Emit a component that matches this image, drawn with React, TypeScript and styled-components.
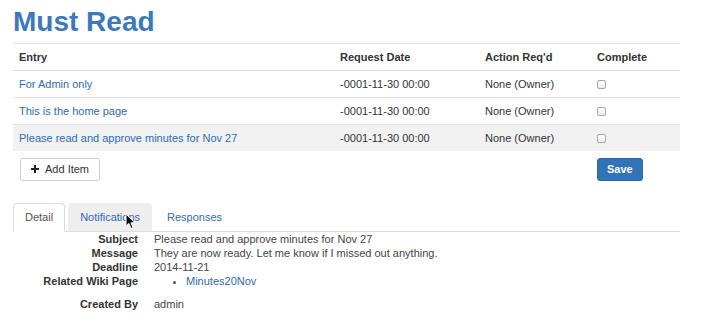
import React from 'react';
import styled, { createGlobalStyle } from 'styled-components';

const Global = createGlobalStyle`
  html, body { margin: 0; padding: 0; background: #fff; }
  body {
    font-family: "Liberation Sans", Arial, Helvetica, sans-serif;
    font-size: 11px;
    color: #333;
  }
`;

const Page = styled.div`
  position: relative;
  width: 667px;
  height: 322px;
  margin-left: 13px;
  overflow: hidden;
`;

const Title = styled.h1`
  margin: 7px 0 5px;
  font-size: 28px;
  line-height: 30.8px;
  font-weight: bold;
  color: #3b79bb;
`;

const Table = styled.table`
  width: 667px;
  border-collapse: collapse;
  table-layout: fixed;
`;

const HeadCell = styled.th`
  text-align: left;
  font-weight: bold;
  color: #333;
  height: 26px;
  padding: 0 6px;
  border-top: 1px solid #e6e6e6;
  border-bottom: 1px solid #dcdcdc;
  vertical-align: middle;
`;

const Row = styled.tr<{ $active?: boolean }>`
  background: ${(p) => (p.$active ? '#f1f1f1' : 'transparent')};
`;

const Cell = styled.td`
  height: 26px;
  padding: 0 6px;
  vertical-align: middle;
  border-top: 1px solid #e2e2e2;
  color: #333;
  white-space: nowrap;
`;

const EntryLink = styled.a`
  color: #2f6bb3;
  text-decoration: none;
`;

const Check = styled.input`
  appearance: none;
  -webkit-appearance: none;
  display: block;
  width: 9px;
  height: 9px;
  margin: 1px 0 0;
  border: 1px solid #a9a9a9;
  border-radius: 2px;
  background: linear-gradient(#fff, #ececec);
`;

const FootCell = styled.td<{ $pad: number }>`
  padding: 7px 0 0 ${(p) => p.$pad}px;
  vertical-align: top;
`;

const Button = styled.button<{ $primary?: boolean }>`
  display: inline-flex;
  align-items: center;
  gap: 6px;
  box-sizing: border-box;
  height: 23px;
  padding: 0 ${(p) => (p.$primary ? '9px' : '10px')};
  font-family: inherit;
  font-size: 11px;
  font-weight: ${(p) => (p.$primary ? 'bold' : 'normal')};
  color: ${(p) => (p.$primary ? '#fff' : '#333')};
  background: ${(p) => (p.$primary ? '#3273b8' : '#fff')};
  border: 1px solid ${(p) => (p.$primary ? '#2c68a8' : '#cfcfcf')};
  border-radius: 3px;
  cursor: pointer;
`;

const Tabs = styled.div`
  display: flex;
  margin-top: 22px;
  border-bottom: 1px solid #ddd;
`;

const Tab = styled.div<{ $state: 'active' | 'hover' | 'idle' }>`
  box-sizing: border-box;
  height: 29px;
  margin-bottom: -1px;
  margin-right: 3px;
  padding: 0 11px;
  display: flex;
  align-items: center;
  border: 1px solid
    ${(p) => (p.$state === 'active' ? '#ddd' : p.$state === 'hover' ? '#eee' : 'transparent')};
  border-bottom-color: ${(p) => (p.$state === 'active' ? '#fff' : '#ddd')};
  border-radius: 4px 4px 0 0;
  background: ${(p) => (p.$state === 'active' ? '#fff' : p.$state === 'hover' ? '#eee' : 'transparent')};
  color: ${(p) => (p.$state === 'active' ? '#555' : '#2f6bb3')};
`;

const Details = styled.dl`
  display: grid;
  grid-template-columns: 125px 1fr;
  column-gap: 16px;
  margin: 0;
  line-height: 14px;
`;

const Term = styled.dt`
  text-align: right;
  font-weight: bold;
  color: #333;
`;

const Desc = styled.dd`
  margin: 0;
  color: #444;
`;

const LinkList = styled.ul`
  margin: 0 0 9px;
  padding-left: 32px;
  list-style: disc;
  color: #555;
`;

const Cursor = styled.svg`
  position: absolute;
  left: 112px;
  top: 213px;
`;

const rows = [
  'For Admin only',
  'This is the home page',
  'Please read and approve minutes for Nov 27',
];

export default function App() {
  return (
    <>
      <Global />
      <Page>
        <Title>Must Read</Title>
        <Table>
          <colgroup>
            <col style={{ width: 321 }} />
            <col style={{ width: 145 }} />
            <col style={{ width: 112 }} />
            <col style={{ width: 89 }} />
          </colgroup>
          <thead>
            <tr>
              <HeadCell>Entry</HeadCell>
              <HeadCell>Request Date</HeadCell>
              <HeadCell>Action Req'd</HeadCell>
              <HeadCell>Complete</HeadCell>
            </tr>
          </thead>
          <tbody>
            {rows.map((r, i) => (
              <Row key={r} $active={i === 2}>
                <Cell>
                  <EntryLink href="#">{r}</EntryLink>
                </Cell>
                <Cell>-0001-11-30 00:00</Cell>
                <Cell>None (Owner)</Cell>
                <Cell>
                  <Check type="checkbox" />
                </Cell>
              </Row>
            ))}
          </tbody>
          <tfoot>
            <tr>
              <FootCell colSpan={3} $pad={7}>
                <Button>
                  <svg width="8" height="8" viewBox="0 0 8 8">
                    <path d="M3 0h2v3h3v2H5v3H3V5H0V3h3z" fill="#222" />
                  </svg>
                  Add Item
                </Button>
              </FootCell>
              <FootCell $pad={6}>
                <Button $primary>Save</Button>
              </FootCell>
            </tr>
          </tfoot>
        </Table>
        <Tabs>
          <Tab $state="active">Detail</Tab>
          <Tab $state="hover">Notifications</Tab>
          <Tab $state="idle">Responses</Tab>
        </Tabs>
        <Details>
          <Term>Subject</Term>
          <Desc>Please read and approve minutes for Nov 27</Desc>
          <Term>Message</Term>
          <Desc>They are now ready. Let me know if I missed out anything.</Desc>
          <Term>Deadline</Term>
          <Desc>2014-11-21</Desc>
          <Term>Related Wiki Page</Term>
          <Desc>
            <LinkList>
              <li>
                <EntryLink href="#">Minutes20Nov</EntryLink>
              </li>
            </LinkList>
          </Desc>
          <Term>Created By</Term>
          <Desc>admin</Desc>
        </Details>
        <Cursor width="11" height="17" viewBox="0 0 11 17">
          <path
            d="M1 1 L1 13 L4 10.5 L6 15.5 L8 14.7 L6 9.8 L10 9.8 Z"
            fill="#111"
            stroke="#fff"
            strokeWidth="1"
            strokeLinejoin="round"
          />
        </Cursor>
      </Page>
    </>
  );
}
